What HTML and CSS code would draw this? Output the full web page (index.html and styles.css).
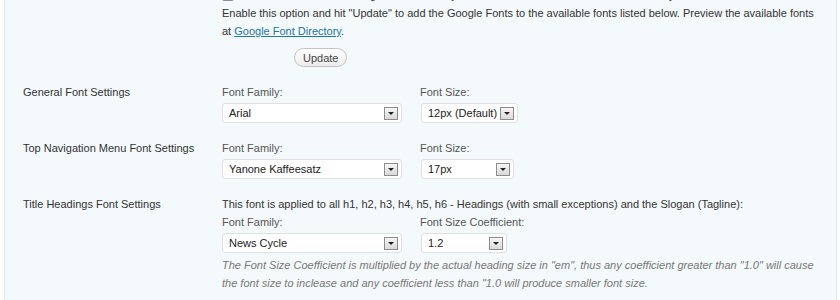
FILE: index.html
```html
<!DOCTYPE html>
<html lang="en">
<head>
    <meta charset="UTF-8">
    <meta name="viewport" content="width=device-width, initial-scale=1.0">
    <title>Font Settings</title>
    <link rel="stylesheet" href="styles.css">
</head>
<body>
    <div class="panel">
        <div class="row">
            <div class="row-label">Enable Google Font Directory</div>
            <div class="row-field">
                <div class="check-line">
                    <span class="checkbox"></span>
                    Use the fonts from the Google Font Directory in addition to the default web safe fonts on your website
                </div>
                <p class="desc">Enable this option and hit "Update" to add the Google Fonts to the available fonts listed below. Preview the available fonts at <a href="#">Google Font Directory</a>.</p>
                <div class="update-wrap">
                    <button class="btn-update">Update</button>
                </div>
            </div>
        </div>

        <div class="row">
            <div class="row-label">General Font Settings</div>
            <div class="row-field">
                <div class="fields">
                    <div class="field">
                        <div class="field-label">Font Family:</div>
                        <div class="select w-family"><span>Arial</span><span class="arrow"></span></div>
                    </div>
                    <div class="field">
                        <div class="field-label">Font Size:</div>
                        <div class="select w-size"><span>12px (Default)</span><span class="arrow"></span></div>
                    </div>
                </div>
            </div>
        </div>

        <div class="row">
            <div class="row-label">Top Navigation Menu Font Settings</div>
            <div class="row-field">
                <div class="fields">
                    <div class="field">
                        <div class="field-label">Font Family:</div>
                        <div class="select w-family"><span>Yanone Kaffeesatz</span><span class="arrow"></span></div>
                    </div>
                    <div class="field">
                        <div class="field-label">Font Size:</div>
                        <div class="select w-size-sm"><span>17px</span><span class="arrow"></span></div>
                    </div>
                </div>
            </div>
        </div>

        <div class="row">
            <div class="row-label">Title Headings Font Settings</div>
            <div class="row-field">
                <div class="intro">This font is applied to all h1, h2, h3, h4, h5, h6 - Headings (with small exceptions) and the Slogan (Tagline):</div>
                <div class="fields">
                    <div class="field">
                        <div class="field-label">Font Family:</div>
                        <div class="select w-family"><span>News Cycle</span><span class="arrow"></span></div>
                    </div>
                    <div class="field">
                        <div class="field-label">Font Size Coefficient:</div>
                        <div class="select w-coef"><span>1.2</span><span class="arrow"></span></div>
                    </div>
                </div>
                <p class="note">The Font Size Coefficient is multiplied by the actual heading size in "em", thus any coefficient greater than "1.0" will cause the font size to inclease and any coefficient less than "1.0 will produce smaller font size.</p>
            </div>
        </div>
    </div>
</body>
</html>
```

FILE: styles.css
```css
* {
    margin: 0;
    padding: 0;
    box-sizing: border-box;
}

body {
    font-family: 'Liberation Sans', Arial, sans-serif;
    font-size: 11px;
    color: #333;
    background: #fff;
}

.panel {
    margin: -23px 3px 0 4px;
    background: #f4f9fc;
    border: 1px solid #dde8ef;
    border-top: none;
    padding-bottom: 40px;
}

.row {
    display: flex;
    padding: 9px 0;
}

.row-label {
    width: 217px;
    padding-left: 18px;
    line-height: 14px;
    flex-shrink: 0;
}

.row-field {
    flex: 1;
}

.check-line {
    display: flex;
    align-items: center;
    gap: 4px;
    height: 18px;
}

.checkbox {
    width: 12px;
    height: 12px;
    border: 1px solid #8f8f8f;
    border-radius: 2px;
    background: #fff;
}

.desc {
    line-height: 18px;
    padding-right: 20px;
}

.desc a {
    color: #21759b;
}

.update-wrap {
    margin: 8px 0 0 72px;
}

.btn-update {
    height: 19px;
    padding: 0 8px;
    font-family: inherit;
    font-size: 11px;
    color: #464646;
    border: 1px solid #c4c4c4;
    border-radius: 10px;
    background: linear-gradient(#ffffff, #ececec);
}

.intro {
    line-height: 14px;
    margin-bottom: 4px;
}

.fields {
    display: flex;
    gap: 18px;
}

.field-label {
    line-height: 14px;
    margin-bottom: 4px;
    color: #555;
}

.select {
    display: flex;
    align-items: center;
    height: 20px;
    padding: 0 3px 0 6px;
    background: #fff;
    border: 1px solid #e0e0e0;
    border-radius: 3px;
    color: #222;
}

.w-family { width: 180px; }
.w-size { width: 97px; margin-left: 1px; }
.w-size-sm { width: 93px; margin-left: 1px; }
.w-coef { width: 86px; margin-left: 1px; }

.arrow {
    position: relative;
    margin-left: auto;
    width: 14px;
    height: 13px;
    border: 1px solid #8c8c8c;
    background: linear-gradient(#f6f6f6, #d9d9d9);
}

.arrow::after {
    content: '';
    position: absolute;
    left: 3px;
    top: 4px;
    border-top: 3px solid #222;
    border-left: 3px solid transparent;
    border-right: 3px solid transparent;
}

.note {
    margin-top: 3px;
    line-height: 18px;
    font-style: italic;
    color: #777;
    padding-right: 20px;
}
```
